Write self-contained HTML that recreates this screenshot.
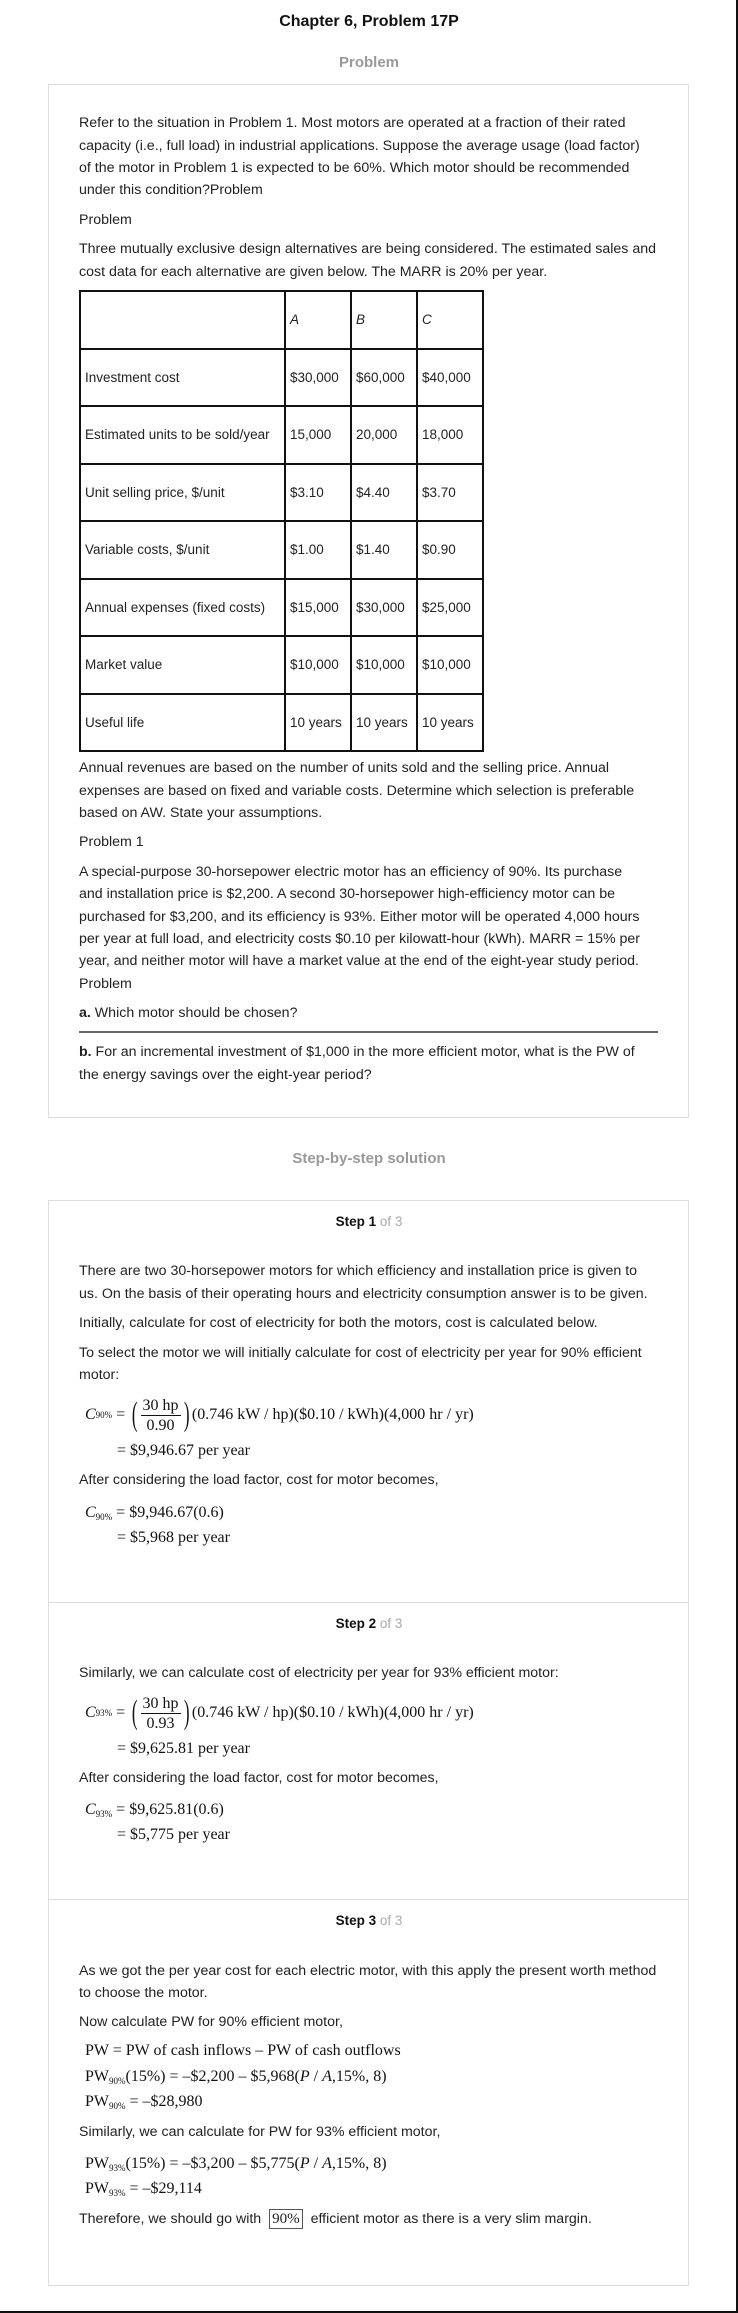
<!DOCTYPE html>
<html><head><meta charset="utf-8"><style>
*{margin:0;padding:0;box-sizing:border-box}
body{width:738px;height:2313px;position:relative;background:#fff;font-family:"Liberation Sans",Arial,sans-serif;font-size:14.2px;color:#222;overflow:hidden}
.l{position:absolute;left:79px;line-height:22px;white-space:nowrap}
.c{position:absolute;left:0;width:738px;text-align:center;line-height:22px}
.panel{position:absolute;left:48px;width:641px;border:1px solid #ddd}
.div{position:absolute;left:48px;width:641px;border-top:1px solid #ddd}
table{position:absolute;left:79px;top:290px;border-collapse:collapse}
td{border:2px solid #111;height:57.5px;padding:0 4px;font-size:13.5px;vertical-align:middle;white-space:nowrap}
.m{position:absolute;font-family:"Liberation Serif","Times New Roman",serif;font-size:16px;white-space:nowrap;line-height:22px;color:#111}
.m sub{font-size:9px;vertical-align:-3px}
.fr{display:inline-block;vertical-align:middle;text-align:center;line-height:19px}
.fr span{display:block;padding:0 2px}
.fr span:first-child{border-bottom:1px solid #111}
.bp{font-size:34px;vertical-align:middle;transform:scaleX(.5);display:inline-block;line-height:40px;font-weight:100}
</style></head><body>
<div class="c" style="top:11px;font-weight:bold;font-size:16px;color:#111">Chapter 6, Problem 17P</div>
<div class="c" style="top:52px;font-weight:bold;font-size:15px;color:#999">Problem</div>
<div class="panel" style="top:84px;height:1034px"></div>
<div class="l" style="top:112px">Refer to the situation in Problem 1. Most motors are operated at a fraction of their rated</div>
<div class="l" style="top:135px">capacity (i.e., full load) in industrial applications. Suppose the average usage (load factor)</div>
<div class="l" style="top:157px">of the motor in Problem 1 is expected to be 60%. Which motor should be recommended</div>
<div class="l" style="top:179px">under this condition?Problem</div>
<div class="l" style="top:209px">Problem</div>
<div class="l" style="top:238px">Three mutually exclusive design alternatives are being considered. The estimated sales and</div>
<div class="l" style="top:261px">cost data for each alternative are given below. The MARR is 20% per year.</div>
<table>
<tr><td style="width:205px"></td><td style="width:66px"><i>A</i></td><td style="width:66px"><i>B</i></td><td style="width:66px"><i>C</i></td></tr>
<tr><td>Investment cost</td><td>$30,000</td><td>$60,000</td><td>$40,000</td></tr>
<tr><td>Estimated units to be sold/year</td><td>15,000</td><td>20,000</td><td>18,000</td></tr>
<tr><td>Unit selling price, $/unit</td><td>$3.10</td><td>$4.40</td><td>$3.70</td></tr>
<tr><td>Variable costs, $/unit</td><td>$1.00</td><td>$1.40</td><td>$0.90</td></tr>
<tr><td>Annual expenses (fixed costs)</td><td>$15,000</td><td>$30,000</td><td>$25,000</td></tr>
<tr><td>Market value</td><td>$10,000</td><td>$10,000</td><td>$10,000</td></tr>
<tr><td>Useful life</td><td>10 years</td><td>10 years</td><td>10 years</td></tr>
</table>
<div class="l" style="top:757px">Annual revenues are based on the number of units sold and the selling price. Annual</div>
<div class="l" style="top:780px">expenses are based on fixed and variable costs. Determine which selection is preferable</div>
<div class="l" style="top:802px">based on AW. State your assumptions.</div>
<div class="l" style="top:831px">Problem 1</div>
<div class="l" style="top:861px">A special-purpose 30-horsepower electric motor has an efficiency of 90%. Its purchase</div>
<div class="l" style="top:883px">and installation price is $2,200. A second 30-horsepower high-efficiency motor can be</div>
<div class="l" style="top:906px">purchased for $3,200, and its efficiency is 93%. Either motor will be operated 4,000 hours</div>
<div class="l" style="top:928px">per year at full load, and electricity costs $0.10 per kilowatt-hour (kWh). MARR = 15% per</div>
<div class="l" style="top:950px">year, and neither motor will have a market value at the end of the eight-year study period.</div>
<div class="l" style="top:973px">Problem</div>
<div class="l" style="top:1002px"><b>a.</b> Which motor should be chosen?</div>
<div style="position:absolute;left:79px;top:1031px;width:579px;height:2px;background:#666"></div>
<div class="l" style="top:1041px"><b>b.</b> For an incremental investment of $1,000 in the more efficient motor, what is the PW of</div>
<div class="l" style="top:1064px">the energy savings over the eight-year period?</div>

<div class="c" style="top:1148px;font-weight:bold;font-size:15px;color:#999">Step-by-step solution</div>
<div class="panel" style="top:1200px;height:1086px"></div>
<div class="div" style="top:1602px"></div>
<div class="div" style="top:1899px"></div>

<div class="c" style="top:1211px;font-weight:bold;color:#111;font-size:13.5px">Step 1 <span style="font-weight:normal;color:#aaa">of 3</span></div>
<div class="l" style="top:1260px">There are two 30-horsepower motors for which efficiency and installation price is given to</div>
<div class="l" style="top:1283px">us. On the basis of their operating hours and electricity consumption answer is to be given.</div>
<div class="l" style="top:1312px">Initially, calculate for cost of electricity for both the motors, cost is calculated below.</div>
<div class="l" style="top:1342px">To select the motor we will initially calculate for cost of electricity per year for 90% efficient</div>
<div class="l" style="top:1364px">motor:</div>
<div class="m" style="left:85px;top:1394px;height:42px;display:flex;align-items:center"><i>C</i><sub>90%</sub>&nbsp;=&nbsp;<span class="bp">(</span><span class="fr"><span>30 hp</span><span>0.90</span></span><span class="bp">)</span>(0.746 kW / hp)($0.10 / kWh)(4,000 hr / yr)</div>
<div class="m" style="left:117px;top:1440px">= $9,946.67 per year</div>
<div class="l" style="top:1469px">After considering the load factor, cost for motor becomes,</div>
<div class="m" style="left:85px;top:1502px"><i>C</i><sub>90%</sub> = $9,946.67(0.6)</div>
<div class="m" style="left:117px;top:1527px">= $5,968 per year</div>

<div class="c" style="top:1613px;font-weight:bold;color:#111;font-size:13.5px">Step 2 <span style="font-weight:normal;color:#aaa">of 3</span></div>
<div class="l" style="top:1662px">Similarly, we can calculate cost of electricity per year for 93% efficient motor:</div>
<div class="m" style="left:85px;top:1692px;height:42px;display:flex;align-items:center"><i>C</i><sub>93%</sub>&nbsp;=&nbsp;<span class="bp">(</span><span class="fr"><span>30 hp</span><span>0.93</span></span><span class="bp">)</span>(0.746 kW / hp)($0.10 / kWh)(4,000 hr / yr)</div>
<div class="m" style="left:117px;top:1738px">= $9,625.81 per year</div>
<div class="l" style="top:1767px">After considering the load factor, cost for motor becomes,</div>
<div class="m" style="left:85px;top:1799px"><i>C</i><sub>93%</sub> = $9,625.81(0.6)</div>
<div class="m" style="left:117px;top:1824px">= $5,775 per year</div>

<div class="c" style="top:1910px;font-weight:bold;color:#111;font-size:13.5px">Step 3 <span style="font-weight:normal;color:#aaa">of 3</span></div>
<div class="l" style="top:1960px">As we got the per year cost for each electric motor, with this apply the present worth method</div>
<div class="l" style="top:1982px">to choose the motor.</div>
<div class="l" style="top:2011px">Now calculate PW for 90% efficient motor,</div>
<div class="m" style="left:85px;top:2040px">PW = PW of cash inflows – PW of cash outflows</div>
<div class="m" style="left:85px;top:2066px">PW<sub>90%</sub>(15%) = –$2,200 – $5,968(<i>P</i> / <i>A</i>,15%, 8)</div>
<div class="m" style="left:85px;top:2091px">PW<sub>90%</sub> = –$28,980</div>
<div class="l" style="top:2121px">Similarly, we can calculate for PW for 93% efficient motor,</div>
<div class="m" style="left:85px;top:2153px">PW<sub>93%</sub>(15%) = –$3,200 – $5,775(<i>P</i> / <i>A</i>,15%, 8)</div>
<div class="m" style="left:85px;top:2178px">PW<sub>93%</sub> = –$29,114</div>
<div class="l" style="top:2208px">Therefore, we should go with <span style="display:inline-block;margin:0 4px;border:1px solid #555;padding:0 2px;font-family:'Liberation Serif',serif;font-size:15px;line-height:18px;vertical-align:middle">90%</span> efficient motor as there is a very slim margin.</div>

<div style="position:absolute;right:0;top:0;width:2px;height:2313px;background:#111"></div>
<div style="position:absolute;left:0;bottom:0;width:738px;height:2px;background:#111"></div>
</body></html>
